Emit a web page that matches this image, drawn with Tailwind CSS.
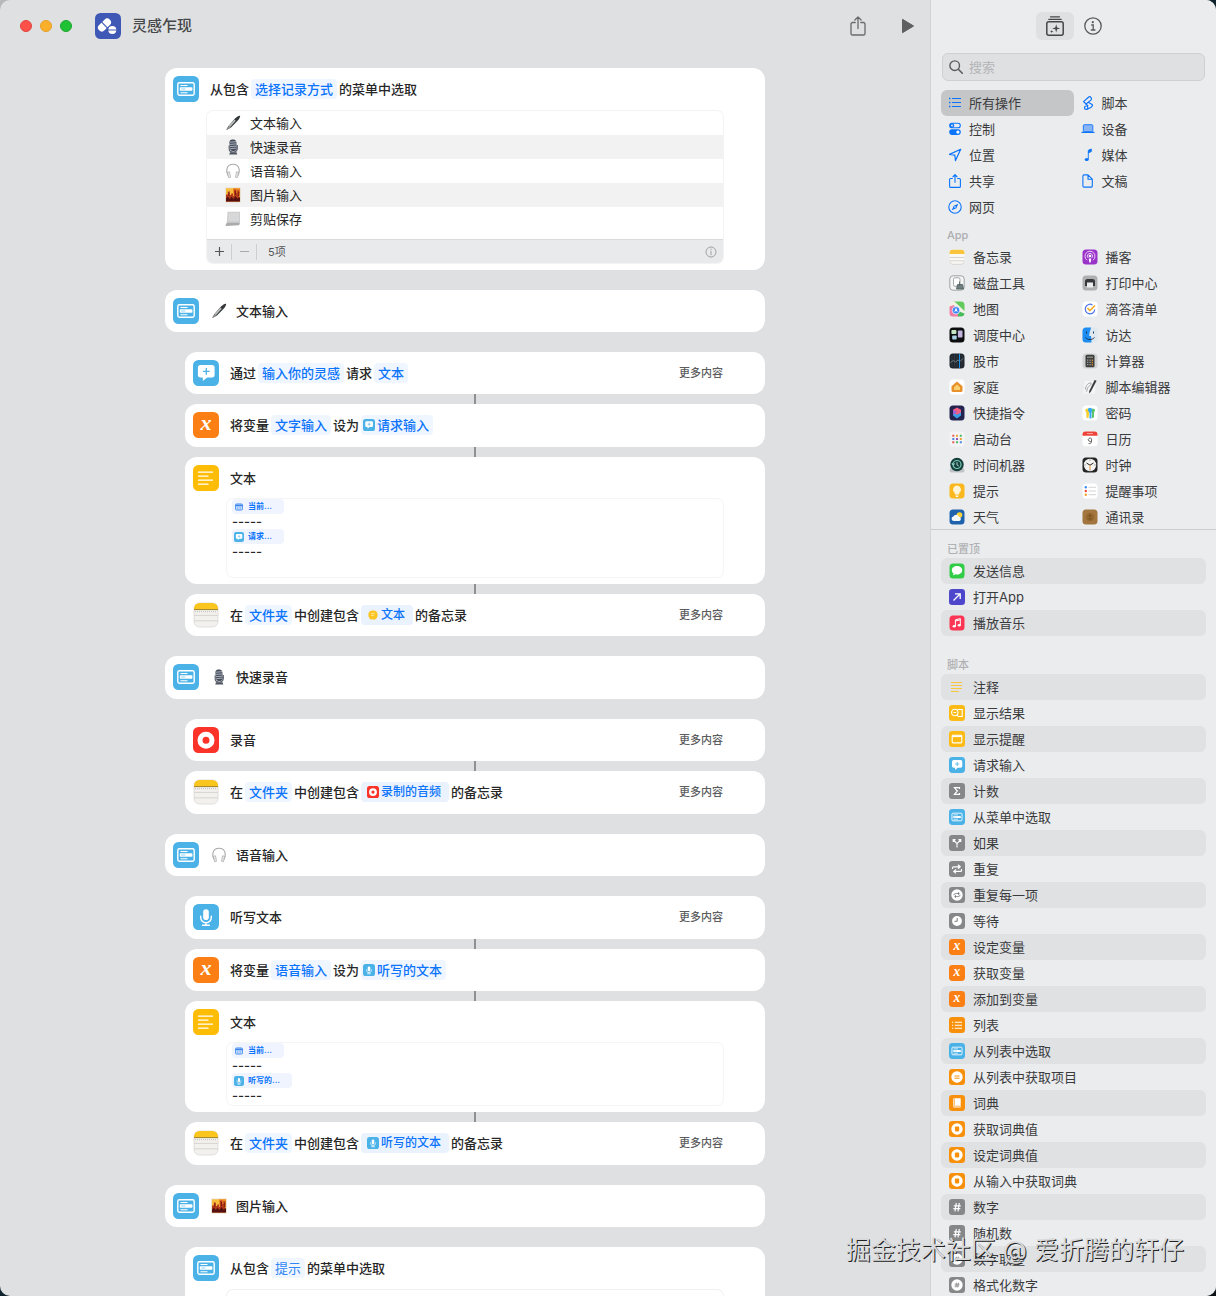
<!DOCTYPE html>
<html lang="zh-CN">
<head>
  <meta charset="UTF-8" />
  <meta name="viewport" content="width=device-width, initial-scale=1.0"/>
  <title>灵感乍现</title>
  <script src="https://cdn.jsdelivr.net/npm/@tailwindcss/browser@4"></script>
</head>
<body class="h-screen overflow-hidden bg-linear-to-br from-[#b9bbbd] via-[#12303f] via-10% to-[#0c1418] font-['Inter','Noto_Sans_CJK_SC',sans-serif] text-[13px] leading-[26px] text-[#262626]">

  <!-- icon set -->
  <svg class="hidden" xmlns="http://www.w3.org/2000/svg">
    <!-- 26px action icons -->
    <symbol id="menu" viewBox="0 0 26 26"><rect width="26" height="26" rx="5.5" fill="#4bb2e8"/><rect x="4.8" y="6.8" width="16.4" height="12.4" rx="1.6" fill="none" stroke="#fff" stroke-width="1.4"/><path d="M7.500 9.500h7M7.500 16.700h7" stroke="#fff" stroke-width="1.100"/><rect x="6.800" y="11.200" width="12.600" height="3.600" rx=".8" fill="#fff"/><path d="M8.300 13h4" stroke="#4bb2e8" stroke-width=".6"/></symbol>
    <symbol id="ask" viewBox="0 0 26 26"><rect width="26" height="26" rx="5.5" fill="#4bb2e8"/><path d="M7.500 5h11.500a2.600 2.600 0 0 1 2.600 2.600v7.200a2.600 2.600 0 0 1-2.600 2.600h-4.800L9.800 21v-3.600H7.500a2.600 2.600 0 0 1-2.600-2.600V7.600A2.600 2.600 0 0 1 7.500 5z" fill="#fff"/><path d="M13.300 8v6.800M9.900 11.400h6.800" stroke="#4bb2e8" stroke-width="1.300"/></symbol>
    <symbol id="var" viewBox="0 0 26 26"><rect width="26" height="26" rx="5.5" fill="#fb7f14"/><text x="13" y="18" text-anchor="middle" font-family="Liberation Serif" font-weight="bold" font-style="italic" font-size="22" fill="#fff">x</text></symbol>
    <symbol id="text" viewBox="0 0 26 26"><rect width="26" height="26" rx="5.5" fill="#fdbc05"/><path d="M5.500 7.200h14M5.500 11.200h9.500M5.500 15.200h14M5.500 19.200h9.500" stroke="#fff" stroke-width="1.300" stroke-linecap="round"/></symbol>
    <symbol id="rec" viewBox="0 0 26 26"><rect width="26" height="26" rx="5.5" fill="#fc3329"/><circle cx="13" cy="13.200" r="6" fill="none" stroke="#fff" stroke-width="5"/></symbol>
    <symbol id="mic" viewBox="0 0 26 26"><rect width="26" height="26" rx="5.5" fill="#4bb2e8"/><rect x="10.200" y="5.200" width="5.600" height="10.800" rx="2.800" fill="#fff"/><path d="M7.700 12.300v1.200a5.300 5.300 0 0 0 10.600 0v-1.200M13 18.800v2.200M9.600 21.200h6.800" fill="none" stroke="#fff" stroke-width="1.400" stroke-linecap="round"/></symbol>
    <symbol id="notes" viewBox="0 0 26 26"><rect x="1" y="1" width="24" height="24" rx="5.500" fill="#f3f1ee" stroke="#dad8d5" stroke-width=".8"/><path d="M1 8V6.500A5.500 5.500 0 0 1 6.500 1h13A5.500 5.500 0 0 1 25 6.500V8z" fill="#fac51c"/><path d="M1 7.600h24" stroke="#a08532" stroke-width="1"/><path d="M2 9.700h22" stroke="#aaa" stroke-width=".7" stroke-dasharray="1 1"/><path d="M1 13.400h24M1 18.800h24" stroke="#cfcdca" stroke-width=".8"/></symbol>
    <symbol id="a-notes" viewBox="0 0 16 16"><rect x=".5" y=".8" width="15" height="14.500" rx="3.200" fill="#f9f8f5"/><path d="M.5 5V4A3.200 3.200 0 0 1 3.700.8h8.600A3.200 3.200 0 0 1 15.500 4v1z" fill="#fac53a"/><path d="M.5 8.500h15M.5 11.800h15" stroke="#cfccc6" stroke-width=".8"/><path d="M1 12.500v0a3 3 0 0 0 3 2.800h8a3 3 0 0 0 3-2.800" fill="none" stroke="#c4c2be" stroke-width=".6"/></symbol>
    <symbol id="date" viewBox="0 0 26 26"><rect x="4" y="5" width="18" height="16" rx="3" fill="#cfe3ff" stroke="#3884ee" stroke-width="2.200"/><path d="M4 9h18" stroke="#3884ee" stroke-width="4"/><path d="M8 14h10M8 17.500h10" stroke="#3884ee" stroke-width="1.500" stroke-dasharray="2 2"/></symbol>
    <symbol id="ydot" viewBox="0 0 26 26"><rect x="3" y="3" width="20" height="20" rx="9" fill="#fcc526"/><path d="M9 10h8M9 14h6" stroke="#ffe69a" stroke-width="2"/></symbol>

    <!-- emoji -->
    <symbol id="e-pen" viewBox="0 0 16 16"><path d="M1.200 15l2.300-4L10 3.600C12 1.400 14 .4 15 .8c.6.800-.6 3-2.400 5L6 12.600z" fill="#35383a"/><path d="M3.500 11L9.500 4.400l1.200 1.300-6 6.900z" fill="#b9bcbd"/><path d="M1.200 15l2.300-4L6 12.600z" fill="#8c8f8d"/></symbol>
    <symbol id="e-mic" viewBox="0 0 16 16"><path d="M4.200 6.500v3.200C4.200 12 6 13 8.200 13S12.300 12 12.300 9.500V6" fill="none" stroke="#5c6270" stroke-width="1.200"/><rect x="4.600" y=".5" width="7" height="11.500" rx="3.300" transform="rotate(-5 8 6)" fill="#454a57"/><path d="M5 3.200l6-.5M4.900 5.400l6.500-.5M5 7.600l6.500-.5M5.300 9.600l6-.5" stroke="#b7bfcc" stroke-width=".9"/><path d="M5 13.200h6.500l.8 2.300H4.200z" fill="#4f5461"/></symbol>
    <symbol id="e-phones" viewBox="0 0 16 16"><path d="M3 12.500C.8 9 .8 1.200 8 1.200S15.200 9 13 12.500" fill="none" stroke="#a6a8aa" stroke-width="1.100"/><path d="M2.300 9.200l2.200-.4 1 5.400-1.800.6zM13.700 9.200l-2.200-.4-1 5.400 1.800.6z" fill="#ececec" stroke="#a5a5a5" stroke-width=".7"/></symbol>
    <symbol id="e-pic" viewBox="0 0 16 16"><rect x=".3" y=".6" width="15.400" height="14.800" fill="#e3d9c6"/><rect x="1" y="1.300" width="14" height="13.200" fill="#f9bd3c"/><path d="M8 1.300h7v5H8z" fill="#ee8a26"/><path d="M1 7.500h1.800v-3h2v3.500h1.400V6.500h2V9h.8V2.500h2.300V6h1V3.200h2V14.500H1z" fill="#b43a1a"/><path d="M1 11.500l1.800-2 2 2.500 1.600-2.500 2 2.500 2-3 2 2.500L15 10v4.500H1z" fill="#54110f"/><path d="M3.800 5.500v3.500M10.500 4v4M13.800 5v4" stroke="#6d1712" stroke-width=".8"/></symbol>
    <symbol id="e-laptop" viewBox="0 0 16 16"><path d="M2.600.8H15v10.600H1.800z" fill="#cbcccd"/><path d="M3.600 1.800h10.400v8.500H3.200z" fill="#d8d8d8"/><path d="M1.800 11.400H15l-.8 2.800L.4 14.900z" fill="#a9aaab"/></symbol>

    <!-- line icons -->
    <symbol id="share" viewBox="0 0 16 20"><g fill="none" stroke="currentColor" stroke-width="1.300" stroke-linecap="round" stroke-linejoin="round"><path d="M5.200 6.500H2.600A1.600 1.600 0 0 0 1 8.100v9.300A1.600 1.600 0 0 0 2.600 19h10.800a1.600 1.600 0 0 0 1.600-1.600V8.100a1.600 1.600 0 0 0-1.600-1.600h-2.600M8 12.500V1M4.900 4L8 .9 11.100 4"/></g></symbol>
    <symbol id="info" viewBox="0 0 18 18"><circle cx="9" cy="9" r="8.200" fill="none" stroke="currentColor" stroke-width="1.300"/><circle cx="8.800" cy="5.200" r="1.100" fill="currentColor"/><path d="M7.200 8h2v4.800M6.800 13h4.600" fill="none" stroke="currentColor" stroke-width="1.300"/></symbol>
    <symbol id="library" viewBox="0 0 18 20"><path d="M4.500.8h9M2.800 3.300h12.400" stroke="currentColor" stroke-width="1.300" stroke-linecap="round"/><rect x=".8" y="5.800" width="16.400" height="13.400" rx="2" fill="none" stroke="currentColor" stroke-width="1.500"/><path d="M10.200 8.200l.9 3.300 3.200.9-3.200.9-.9 3.300-.9-3.300-3.200-.9 3.200-.9zM5.700 13.900l.4 1.200 1.200.4-1.200.4-.4 1.300-.4-1.300-1.200-.4 1.200-.4z" fill="currentColor"/></symbol>
    <symbol id="search" viewBox="0 0 14 14"><circle cx="5.700" cy="5.700" r="4.800" fill="none" stroke="currentColor" stroke-width="1.400"/><path d="M9.300 9.300l4 4" stroke="currentColor" stroke-width="1.600" stroke-linecap="round"/></symbol>
    <symbol id="c-list" viewBox="0 0 14 14"><path d="M1 2.500h1.500M1 6.500h1.500M1 10.500h1.500" stroke="currentColor" stroke-width="1.400"/><path d="M4 2.500H13M4 6.500H13M4 10.500H13" stroke="currentColor" stroke-width="1.200"/></symbol>
    <symbol id="c-share" viewBox="0 0 14 14"><path d="M4.800 4.500H2.600a1 1 0 0 0-1 1v6.900a1 1 0 0 0 1 1h8.800a1 1 0 0 0 1-1V5.500a1 1 0 0 0-1-1H9.200M7 8.800V.8M4.700 3L7 .7 9.300 3" fill="none" stroke="currentColor" stroke-width="1.100" stroke-linejoin="round"/></symbol>
    <symbol id="c-control" viewBox="0 0 14 14"><rect x="1.700" y="1.200" width="10.600" height="4.600" rx="2.300" fill="none" stroke="currentColor" stroke-width="1.100"/><circle cx="4" cy="3.500" r="2.200" fill="currentColor"/><circle cx="4" cy="3.500" r=".9" fill="#ebecee"/><rect x="1.200" y="7.300" width="11.600" height="5.600" rx="2.800" fill="currentColor"/><circle cx="9.900" cy="10.100" r="1.600" fill="#fff"/></symbol>
    <symbol id="c-place" viewBox="0 0 14 14"><path d="M12.700 1.300L1.500 6.400l5.300.8.700 5.400z" fill="none" stroke="currentColor" stroke-width="1.200" stroke-linejoin="round"/></symbol>
    <symbol id="c-web" viewBox="0 0 14 14"><circle cx="7" cy="7" r="6.200" fill="none" stroke="currentColor" stroke-width="1.100"/><path d="M10.300 3.700L8.300 8.200 3.700 10.300 5.800 5.800z" fill="currentColor"/><circle cx="7" cy="7" r=".8" fill="#fff"/></symbol>
    <symbol id="c-script" viewBox="0 0 14 14"><g fill="none" stroke="currentColor" stroke-width="1.200" stroke-linejoin="round"><path d="M9.900 4.100L5 8 2.600 5.600 7.700 1c1.800-1.200 3.600 1.500 2.200 3.100zM7.200 6.300l3.900 2.200c1 1-.2 2.200-1.200 3l-3.700 1.800"/><circle cx="5.200" cy="11.700" r="1.700"/><path d="M5 8l2.200 2.200"/></g></symbol>
    <symbol id="c-device" viewBox="0 0 14 14"><rect x="2.300" y="2.700" width="9.500" height="7" rx="1" fill="#8ab4f4" stroke="currentColor" stroke-width=".9"/><path d="M.5 10.400h13" stroke="currentColor" stroke-width="1.300"/></symbol>
    <symbol id="c-media" viewBox="0 0 14 14"><ellipse cx="5.700" cy="11.500" rx="2" ry="1.600" fill="currentColor"/><path d="M7.300 11.300V2.300l3-1.300v2.600L7.300 4.900" fill="currentColor" stroke="currentColor" stroke-width=".9"/></symbol>
    <symbol id="c-doc" viewBox="0 0 14 14"><path d="M7 .9H3.100A1.200 1.200 0 0 0 1.900 2.100v9.800a1.200 1.200 0 0 0 1.200 1.200h7a1.200 1.200 0 0 0 1.200-1.200V5.200zM7 .9v4.300h4.300" fill="none" stroke="currentColor" stroke-width="1.100" stroke-linejoin="round"/></symbol>

    <!-- app icons -->
    <symbol id="a-disk" viewBox="0 0 16 16"><rect x=".8" y=".8" width="14.400" height="14.400" rx="3.200" fill="#f4f5f5" stroke="#8b9093" stroke-width=".8"/><rect x="4.500" y="2.800" width="6.500" height="8.500" rx="1.500" fill="#fff" stroke="#8d9295" stroke-width=".8"/><path d="M10.500 6.500v4M8.500 9.500h5l1 4.500H7.500z" fill="#6f7f7f" stroke="#4e5c5c" stroke-width=".8"/></symbol>
    <symbol id="a-map" viewBox="0 0 16 16"><rect x=".5" y=".5" width="15" height="15" rx="3.500" fill="#f3f1e6"/><path d="M4 .5h8a3.500 3.500 0 0 1 3.500 3.500v6L6 1z" fill="#63c95d"/><path d="M.5 5.500L5 4l5 11.500H4a3.500 3.500 0 0 1-3.500-3.500z" fill="#f17ca4"/><path d="M9 10l6.500 2.500A3.500 3.500 0 0 1 12 15.500H9z" fill="#46bd5c"/><circle cx="7" cy="9.300" r="3.800" fill="#3d86f3" stroke="#fff" stroke-width=".7"/><path d="M7 6.500l1.800 4.400L7 10l-1.800.9z" fill="#fff"/></symbol>
    <symbol id="a-mission" viewBox="0 0 16 16"><rect x=".5" y=".5" width="15" height="15" rx="3.500" fill="#0c0d0f"/><rect x="2.400" y="3" width="5" height="4" rx=".8" fill="#c4e6c2"/><rect x="8.900" y="3.500" width="4.600" height="7" rx=".8" fill="#c4b5e0"/><rect x="3.200" y="8.500" width="4.500" height="4" rx=".8" fill="#a9d1e4"/></symbol>
    <symbol id="a-stocks" viewBox="0 0 16 16"><rect x=".5" y=".5" width="15" height="15" rx="3.500" fill="#20262d"/><path d="M3 2v12M5.500 2v12M8 2v12M13 2v12" stroke="#3a434c" stroke-width=".6"/><path d="M1.500 9.500l3-2 2 1.500 2.500-2 2 1.500 3-3" fill="none" stroke="#77838d" stroke-width=".9"/><path d="M10.500 1v14" stroke="#1b92ea" stroke-width="1"/></symbol>
    <symbol id="a-home" viewBox="0 0 16 16"><rect x=".5" y=".5" width="15" height="15" rx="3.500" fill="#fff"/><path d="M8 2.500l5.500 4.800v4.200a1.500 1.500 0 0 1-1.500 1.500H4a1.500 1.500 0 0 1-1.500-1.500V7.300z" fill="#e8912b"/><path d="M8 5.500l3 2.700V11H5V8.200z" fill="#fbd071"/></symbol>
    <symbol id="a-shortcut" viewBox="0 0 16 16"><rect x=".5" y=".5" width="15" height="15" rx="3.500" fill="#242350"/><path d="M8 2.500l4 2.300v3.700L8 10.800 4 8.500V4.800z" fill="#ef5f86"/><path d="M4 7.500l4 2.300 4-2.300v3L8 13.500 4 10.500z" fill="#3b9fe8"/><path d="M4 5l4 2-4 3z" fill="#9a62d8"/></symbol>
    <symbol id="a-launch" viewBox="0 0 16 16"><rect x=".5" y=".5" width="15" height="15" rx="3.500" fill="#f4f4f6"/><path d="M3.300 4.700h2M3.300 11.200h2" stroke="#e65c50" stroke-width="2"/><path d="M7 4.700h2M10.800 8h2" stroke="#f0a032" stroke-width="2"/><path d="M10.800 4.700h2M7 11.200h2" stroke="#4bb862" stroke-width="2"/><path d="M3.300 8h2M10.800 11.200h2" stroke="#4b86df" stroke-width="2"/><path d="M7 8h2" stroke="#9355bb" stroke-width="2"/></symbol>
    <symbol id="a-time" viewBox="0 0 16 16"><path d="M2 10h12l1.500 3v.5a2 2 0 0 1-2 2h-11a2 2 0 0 1-2-2V13z" fill="#bfc3c6"/><circle cx="8" cy="7.500" r="6.700" fill="#153f3c"/><circle cx="8" cy="7.500" r="4" fill="none" stroke="#7ac6b2" stroke-width="1.200"/><path d="M8 5v3l1.800 1M3 6l1.200 2L6 6.500" fill="none" stroke="#b1e5d8" stroke-width=".9"/></symbol>
    <symbol id="a-tips" viewBox="0 0 16 16"><rect x=".5" y=".5" width="15" height="15" rx="3.500" fill="#fbb71e"/><path d="M8 2.500a4 4 0 0 1 2.500 7.100L10 11.500H6l-.5-1.900A4 4 0 0 1 8 2.500z" fill="#fff5d6"/><path d="M6.300 12.500h3.400L8.900 14H7.100z" fill="#fff"/></symbol>
    <symbol id="a-weather" viewBox="0 0 16 16"><rect x=".5" y=".5" width="15" height="15" rx="3.500" fill="#1e62ae"/><circle cx="10.500" cy="6" r="2.800" fill="#fdd13a"/><path d="M4.500 12a2.300 2.300 0 0 1-.2-4.500A3.200 3.200 0 0 1 10 7.700 2.200 2.200 0 0 1 10.300 12z" fill="#f2f7fc"/></symbol>
    <symbol id="a-podcast" viewBox="0 0 16 16"><rect x=".5" y=".5" width="15" height="15" rx="3.500" fill="#9a33c9"/><g fill="none" stroke="#f3dcfa" stroke-width=".9"><path d="M5 11.200a5 5 0 1 1 6 0"/><path d="M6.300 9a2.600 2.600 0 1 1 3.400 0"/></g><circle cx="8" cy="7" r="1.300" fill="#fff"/><path d="M6.800 9.500h2.400l-.5 4H7.300z" fill="#fff"/></symbol>
    <symbol id="a-print" viewBox="0 0 16 16"><rect x=".5" y=".5" width="15" height="15" rx="3.500" fill="#adafb1"/><path d="M3 6.500A2.500 2.500 0 0 1 5.500 4h5A2.500 2.500 0 0 1 13 6.500V11H3z" fill="#35373a"/><rect x="5" y="7.500" width="6" height="5" fill="#eceded"/></symbol>
    <symbol id="a-tick" viewBox="0 0 16 16"><rect x=".5" y=".5" width="15" height="15" rx="3.500" fill="#fff"/><path d="M10.500 3.900A4.800 4.800 0 1 0 12.800 8.500" fill="none" stroke="#4a73ec" stroke-width="1.200"/><path d="M5.500 7l2.300 2.500L13 4.500" fill="none" stroke="#f3ad28" stroke-width="1.700"/></symbol>
    <symbol id="a-finder" viewBox="0 0 16 16"><rect x=".5" y=".5" width="15" height="15" rx="3.500" fill="#dfe7ef"/><path d="M4 .5h5.200C8 3.500 7.400 6 7.200 9H9l.5 6.500H4A3.500 3.500 0 0 1 .5 12V4A3.500 3.500 0 0 1 4 .5z" fill="#1d8df1"/><path d="M4.500 4.500v2M11.500 4.500v2M3.500 10.500c2.500 2.700 6.500 2.700 9 0" fill="none" stroke="#1a3556" stroke-width="1"/></symbol>
    <symbol id="a-calc" viewBox="0 0 16 16"><rect x=".5" y=".5" width="15" height="15" rx="3.500" fill="#d0d2d3"/><rect x="3.500" y="1.800" width="9" height="12.400" rx="1.500" fill="#3d3e3d"/><path d="M5 4.200h6" stroke="#8a8d87" stroke-width="1.400"/><path d="M5 7.200h4M5 9.400h4M5 11.700h4" stroke="#9a9a97" stroke-width="1.200" stroke-dasharray="1 .6"/><path d="M10.300 6.500v6" stroke="#d88e32" stroke-width="1.200" stroke-dasharray="1.500 .7"/></symbol>
    <symbol id="a-editor" viewBox="0 0 16 16"><path d="M3 2h11l-1 12.500H1z" fill="#f5f5f5"/><path d="M3.500 10.500c0-4 3-7 5.500-6.500 1 2-2.500 3-3.500 5s.5 3-1.500 3.500" fill="none" stroke="#9da0a1" stroke-width=".9"/><path d="M12.600 1l2 .8-5.800 11L7 14.500l.2-2.500z" fill="#3b3d3f"/></symbol>
    <symbol id="a-pass" viewBox="0 0 16 16"><rect x=".5" y=".5" width="15" height="15" rx="3.500" fill="#fff"/><path d="M3.200 5.500a2 2 0 0 1 4 0v1L6.500 13h-2L4.300 8z" fill="#f6cf32"/><path d="M9 5.500a2 2 0 0 1 4 0L12 8v4.500l-2 .5V8z" fill="#5dc46e"/><path d="M5.800 5a2.200 2.200 0 0 1 4.400 0L9.500 8v5.500h-2V8z" fill="#36a8ef"/></symbol>
    <symbol id="a-cal" viewBox="0 0 16 16"><rect x=".5" y=".8" width="15" height="14.500" rx="3" fill="#fff"/><path d="M.5 4.800V3.500A3 3 0 0 1 3.500.5h9a3 3 0 0 1 3 3v1.300z" fill="#ee4238"/><path d="M5 2.600h6" stroke="#f7aaa5" stroke-width="1"/><path d="M9.600 9.500a1.700 1.700 0 1 1 0-1.500v2c0 1.700-1 2.900-3 2.600" fill="none" stroke="#555" stroke-width=".9"/></symbol>
    <symbol id="a-clock" viewBox="0 0 16 16"><rect x=".5" y=".5" width="15" height="15" rx="3.500" fill="#252525"/><circle cx="8" cy="8" r="6.200" fill="#f4f4f2"/><path d="M8 2.500v1M8 12.500v1M2.500 8h1M12.500 8h1" stroke="#333" stroke-width=".8"/><path d="M4.500 6L8 8.200 11.500 6" fill="none" stroke="#222" stroke-width="1"/><path d="M8 8v4.500" stroke="#f0942a" stroke-width=".9"/></symbol>
    <symbol id="a-remind" viewBox="0 0 16 16"><rect x=".5" y=".5" width="15" height="15" rx="3.500" fill="#fff"/><circle cx="3.800" cy="4.300" r="1.200" fill="#3d8cf0"/><circle cx="3.800" cy="8" r="1.200" fill="#ef4b3f"/><circle cx="3.800" cy="11.700" r="1.200" fill="#f5a02c"/><path d="M6.500 4.300h7.500M6.500 8h7.500M6.500 11.700h7.500" stroke="#c9cacb" stroke-width=".8"/></symbol>
    <symbol id="a-contact" viewBox="0 0 16 16"><rect x=".5" y=".5" width="15" height="15" rx="3.500" fill="#a3763f"/><circle cx="8" cy="8" r="4.300" fill="#96682f"/><circle cx="8" cy="6.700" r="1.400" fill="#7a5424"/><path d="M5.500 10.500c.6-2 4.400-2 5 0z" fill="#7a5424"/></symbol>

    <!-- small action icons -->
    <symbol id="s-msg" viewBox="0 0 16 16"><rect x=".5" y=".5" width="15" height="15" rx="3.500" fill="#2fcc46"/><path d="M8 3c3 0 5.200 1.800 5.200 4.200S11 11.500 8 11.500c-.6 0-1.100 0-1.600-.2L4 12.500l.6-2A4 4 0 0 1 2.800 7.200C2.800 4.800 5 3 8 3z" fill="#fff"/></symbol>
    <symbol id="s-open" viewBox="0 0 16 16"><rect width="16" height="16" rx="3.200" fill="#4f47cb"/><path d="M4.500 11.500l6.500-6.500M6 4.800h5.200V10" fill="none" stroke="#fff" stroke-width="1.300"/></symbol>
    <symbol id="s-music" viewBox="0 0 16 16"><rect x=".5" y=".5" width="15" height="15" rx="3.500" fill="#fb3553"/><ellipse cx="5.200" cy="11.200" rx="1.600" ry="1.300" fill="#fff"/><ellipse cx="10.200" cy="10.200" rx="1.600" ry="1.300" fill="#fff"/><path d="M6.400 11.200V4.800l4.900-1.200v6.600M6.400 6l4.900-1.200" fill="none" stroke="#fff" stroke-width="1"/></symbol>
    <symbol id="s-comment" viewBox="0 0 16 16"><path d="M2.500 3.500h10M2.500 6.500h10M2.500 9.500h10M2.500 12.500h7" stroke="#f9c63b" stroke-width="1.200" stroke-linecap="round"/></symbol>
    <symbol id="s-result" viewBox="0 0 16 16"><rect width="16" height="16" rx="3.200" fill="#fbbb14"/><g fill="none" stroke="#fff" stroke-width="1.100"><path d="M8.500 4.500h4.700v7H9.500"/><circle cx="5.800" cy="7.500" r="3.200"/><path d="M8 10l1.800 2M4.500 7.500h2.800"/></g></symbol>
    <symbol id="s-alert" viewBox="0 0 16 16"><rect width="16" height="16" rx="3.200" fill="#fbbb14"/><rect x="3.200" y="4.300" width="9.600" height="7.600" rx=".8" fill="none" stroke="#fff" stroke-width="1.100"/><path d="M3 5.300h10" stroke="#fff" stroke-width="1.600"/></symbol>
    <symbol id="s-sum" viewBox="0 0 16 16"><rect width="16" height="16" rx="3.200" fill="#868789"/><path d="M10.500 6V4.700H5.500L8.300 8l-2.800 3.300h5V10" fill="none" stroke="#fff" stroke-width="1.200"/></symbol>
    <symbol id="s-if" viewBox="0 0 16 16"><rect width="16" height="16" rx="3.200" fill="#868789"/><path d="M8 12.500V8.600L4.500 5M8 8.600L11.500 5M4.200 7V4.600h2.300M11.800 7V4.600H9.500" fill="none" stroke="#fff" stroke-width="1.100"/></symbol>
    <symbol id="s-loop" viewBox="0 0 16 16"><rect width="16" height="16" rx="3.200" fill="#868789"/><path d="M3.500 8V6.800A1 1 0 0 1 4.500 5.800h6M9 3.800l2.200 2L9 7.800M12.500 8v1.400a1 1 0 0 1-1 1h-6M7 8.400l-2.200 2 2.200 2" fill="none" stroke="#fff" stroke-width="1.200"/></symbol>
    <symbol id="s-each" viewBox="0 0 16 16"><rect width="16" height="16" rx="3.200" fill="#868789"/><circle cx="8" cy="8" r="5.700" fill="#fff"/><path d="M5 8.200C5 6.500 6 6.500 10 6.500M9 5.300l1.300 1.200L9 7.700M11 7.800c0 1.700-1 1.700-5 1.700M7 8.300L5.700 9.500 7 10.700" fill="none" stroke="#6f7072" stroke-width=".9"/></symbol>
    <symbol id="s-wait" viewBox="0 0 16 16"><rect width="16" height="16" rx="3.200" fill="#868789"/><circle cx="8" cy="8" r="4.900" fill="#fff"/><path d="M8.200 5v3.300H5.500" fill="none" stroke="#777" stroke-width="1"/></symbol>
    <symbol id="s-list" viewBox="0 0 16 16"><rect width="16" height="16" rx="3.200" fill="#f8900c"/><path d="M3 5.300h1.300M3 8.300h1.300M3 11.300h1.300M5.800 5.300H13M5.800 8.300H13M5.800 11.300H13" stroke="#fff" stroke-width="1.100"/></symbol>
    <symbol id="s-item" viewBox="0 0 16 16"><rect width="16" height="16" rx="3.200" fill="#f8900c"/><circle cx="8" cy="8" r="5.700" fill="#fff"/><path d="M5.500 7h5M5.500 9.200h5" stroke="#f8900c" stroke-width="1"/></symbol>
    <symbol id="s-dict" viewBox="0 0 16 16"><rect width="16" height="16" rx="3.200" fill="#f8900c"/><path d="M5 3.300h6.700v9.300H5.200a1.200 1.200 0 0 1-1-1.200V4.200A1 1 0 0 1 5 3.300z" fill="#fff"/><path d="M5.300 3.500v7M4.500 11.200h7" stroke="#f8900c" stroke-width=".7"/></symbol>
    <symbol id="s-dictval" viewBox="0 0 16 16"><rect width="16" height="16" rx="3.200" fill="#f8900c"/><circle cx="8" cy="8" r="5.700" fill="#fff"/><rect x="5.900" y="5.600" width="4.300" height="4.800" rx=".8" fill="#f8900c"/></symbol>
    <symbol id="s-num" viewBox="0 0 16 16"><rect width="16" height="16" rx="3.200" fill="#868789"/><path d="M7.300 4L6 12.300M10.300 4L9 12.300M4.800 6.800h7M4.300 9.700h7" stroke="#fff" stroke-width="1.200"/></symbol>
    <symbol id="s-format" viewBox="0 0 16 16"><rect width="16" height="16" rx="3.200" fill="#868789"/><circle cx="8" cy="8" r="5.700" fill="#fff"/><path d="M7.500 5.700L6.800 10.500M9.400 5.700l-.7 4.800M5.800 7.200h4.700M5.500 9h4.700" stroke="#777" stroke-width=".7"/></symbol>
  </svg>

  <div class="flex h-screen overflow-hidden rounded-[10px] bg-[#dfe0e2]">

    <!-- editor -->
    <main class="flex min-w-0 flex-1 flex-col">
      <header class="flex h-[52px] shrink-0 items-center pr-4 pl-5">
        <div class="flex gap-2">
          <button aria-label="关闭" class="size-3 rounded-full border border-[#e0443e] bg-[#fb5149]"></button>
          <button aria-label="最小化" class="size-3 rounded-full border border-[#e39e2b] bg-[#fcb02a]"></button>
          <button aria-label="缩放" class="size-3 rounded-full border border-[#1ea52f] bg-[#1fc234]"></button>
        </div>
        <svg class="ml-[23px] size-[26px]" viewBox="0 0 26 26"><rect width="26" height="26" rx="5.500" fill="#4058b5"/><rect x="1.900" y="8.200" width="15.200" height="7.600" rx="3.800" transform="rotate(-45 9.500 12)" fill="#fff"/><path d="M6.200 8.700l6.600 6.600" stroke="#4058b5" stroke-width="1.200"/><circle cx="17.300" cy="17" r="4.800" fill="#4058b5"/><circle cx="17.300" cy="17" r="4" fill="#fff"/><path d="M13 17h8.500" stroke="#4058b5" stroke-width="1.100"/></svg>
        <h1 class="ml-[11px] flex-1 text-[15px] font-medium text-[#454648]">灵感乍现</h1>
        <button aria-label="共享" class="text-[#68696b]"><svg class="h-5 w-4"><use href="#share"/></svg></button>
        <button aria-label="运行" class="ml-9"><svg class="h-4 w-3" viewBox="0 0 12 16"><path d="M.5 1.300L11.600 8 .5 14.700z" fill="#5e5f61" stroke="#5e5f61" stroke-linejoin="round"/></svg></button>
      </header>

      <div class="min-h-0 flex-1 overflow-hidden px-4 pt-4">
        <div class="mx-auto flex w-full max-w-[600px] flex-col gap-5 font-medium">

          <section class="rounded-xl bg-white px-2 pt-2 pb-[7px]">
            <div class="flex items-center gap-[11px]">
              <svg class="size-[26px]"><use href="#menu"/></svg>
              <p class="flex items-center">从包含<button class="mx-0.5 rounded bg-[#f0f6ff] px-1 leading-5 text-[#0b74fb]">选择记录方式</button>的菜单中选取</p>
            </div>
            <div class="mt-[9px] mr-[34px] ml-[34px] overflow-hidden rounded-md font-normal leading-6 ring-1 ring-[#f3f3f3]">
              <ul class="pb-2">
                <li class="flex items-center gap-[9px] pl-[18px]"><svg class="size-4"><use href="#e-pen"/></svg>文本输入</li>
                <li class="flex items-center gap-[9px] bg-[#f2f2f2] pl-[18px]"><svg class="size-4"><use href="#e-mic"/></svg>快速录音</li>
                <li class="flex items-center gap-[9px] pl-[18px]"><svg class="size-4"><use href="#e-phones"/></svg>语音输入</li>
                <li class="flex items-center gap-[9px] bg-[#f2f2f2] pl-[18px]"><svg class="size-4"><use href="#e-pic"/></svg>图片输入</li>
                <li class="flex items-center gap-[9px] pl-[18px]"><svg class="size-4"><use href="#e-laptop"/></svg>剪贴保存</li>
              </ul>
              <div class="flex h-6 items-center border-t border-[#d9dadc] bg-[#e9eaec] text-[11px] text-[#55575a]">
                <button aria-label="添加" class="flex h-4 w-[25px] items-center justify-center border-r border-[#cdced0]"><svg class="size-[9px]" viewBox="0 0 9 9"><path d="M4.500 0v9M0 4.500h9" stroke="#55575a" stroke-width="1.200"/></svg></button>
                <button aria-label="移除" class="flex h-4 w-[25px] items-center justify-center border-r border-[#cdced0]"><svg class="size-[9px]" viewBox="0 0 9 9"><path d="M0 4.500h9" stroke="#aaabad" stroke-width="1.200"/></svg></button>
                <span class="ml-[11px] flex-1">5项</span>
                <svg class="mr-1.5 size-3" viewBox="0 0 12 12"><circle cx="6" cy="6" r="5" fill="none" stroke="#a0a1a3"/><path d="M6 2.700v1.200M6 4.800v4.400" stroke="#a0a1a3"/></svg>
              </div>
            </div>
          </section>

          <section class="flex items-center rounded-xl bg-white p-2">
            <svg class="size-[26px]"><use href="#menu"/></svg>
            <svg class="ml-3 size-4"><use href="#e-pen"/></svg>
            <h2 class="ml-[9px]">文本输入</h2>
          </section>

          <div class="ml-5 flex flex-col">
            <section class="flex items-center gap-[11px] rounded-xl bg-white py-2 pr-[42px] pl-2">
              <svg class="size-[26px]"><use href="#ask"/></svg>
              <p class="flex flex-1 items-center">通过<button class="mx-0.5 rounded bg-[#f0f6ff] px-1 leading-5 text-[#0b74fb]">输入你的灵感</button>请求<button class="mx-0.5 rounded bg-[#f0f6ff] px-1 leading-5 text-[#0b74fb]">文本</button></p>
              <button class="text-[11px] text-[#5c5d5f]">更多内容</button>
            </section>
            <div class="h-2.5 w-0.5 self-center bg-[#8e9092]"></div>
            <section class="flex items-center gap-[11px] rounded-xl bg-white pt-2 pr-[42px] pb-[9px] pl-2">
              <svg class="size-[26px]"><use href="#var"/></svg>
              <p class="flex flex-1 items-center">将变量<button class="mx-0.5 rounded bg-[#f0f6ff] px-1 leading-5 text-[#0b74fb]">文字输入</button>设为<button class="mx-0.5 flex items-center gap-0.5 rounded bg-[#f0f6ff] pr-1 pl-0.5 leading-5 text-[#0b74fb]"><svg class="size-3"><use href="#ask"/></svg>请求输入</button></p>
            </section>
            <div class="h-2.5 w-0.5 self-center bg-[#8e9092]"></div>
            <section class="rounded-xl bg-white px-2 pt-2 pb-[7px]">
              <div class="flex items-center gap-[11px]">
                <svg class="size-[26px]"><use href="#text"/></svg>
                <h3>文本</h3>
              </div>
              <div class="mt-2 mr-[34px] ml-[34px] flex h-[78px] flex-col items-start rounded-md pl-[5px] text-[13px] leading-[15px] ring-1 ring-[#f5f5f6]">
                <span class="flex h-[15px] items-center gap-1 rounded bg-[#f0f4ff] pr-3 pl-0.5 text-[8px] font-bold text-[#0b74fb]"><svg class="size-2.5"><use href="#date"/></svg>当前...</span>
                <span>-----</span>
                <span class="flex h-[15px] items-center gap-1 rounded bg-[#f0f4ff] pr-3 pl-0.5 text-[8px] font-bold text-[#0b74fb]"><svg class="size-2.5"><use href="#ask"/></svg>请求...</span>
                <span>-----</span>
              </div>
            </section>
            <div class="h-2.5 w-0.5 self-center bg-[#8e9092]"></div>
            <section class="flex items-center gap-[11px] rounded-xl bg-white py-2 pr-[42px] pl-2">
              <svg class="size-[26px]"><use href="#notes"/></svg>
              <p class="flex flex-1 items-center">在<button class="mx-0.5 rounded bg-[#f0f6ff] px-1 leading-5 text-[#0b74fb]">文件夹</button>中创建包含<button class="mx-0.5 flex items-center gap-0.5 rounded bg-[#eaf2fe] pr-2 pl-1.5 text-xs leading-5 text-[#0b74fb]"><svg class="size-3"><use href="#ydot"/></svg>文本</button>的备忘录</p>
              <button class="text-[11px] text-[#5c5d5f]">更多内容</button>
            </section>
          </div>

          <section class="flex items-center rounded-xl bg-white px-2 pt-2 pb-[9px]">
            <svg class="size-[26px]"><use href="#menu"/></svg>
            <svg class="ml-3 size-4"><use href="#e-mic"/></svg>
            <h2 class="ml-[9px]">快速录音</h2>
          </section>

          <div class="ml-5 flex flex-col">
            <section class="flex items-center gap-[11px] rounded-xl bg-white py-2 pr-[42px] pl-2">
              <svg class="size-[26px]"><use href="#rec"/></svg>
              <h3 class="flex-1">录音</h3>
              <button class="text-[11px] text-[#5c5d5f]">更多内容</button>
            </section>
            <div class="h-2.5 w-0.5 self-center bg-[#8e9092]"></div>
            <section class="flex items-center gap-[11px] rounded-xl bg-white pt-2 pr-[42px] pb-[9px] pl-2">
              <svg class="size-[26px]"><use href="#notes"/></svg>
              <p class="flex flex-1 items-center">在<button class="mx-0.5 rounded bg-[#f0f6ff] px-1 leading-5 text-[#0b74fb]">文件夹</button>中创建包含<button class="mx-0.5 flex items-center gap-0.5 rounded bg-[#eaf2fe] pr-2 pl-1.5 text-xs leading-5 text-[#0b74fb]"><svg class="size-3"><use href="#rec"/></svg>录制的音频</button>的备忘录</p>
              <button class="text-[11px] text-[#5c5d5f]">更多内容</button>
            </section>
          </div>

          <section class="flex items-center rounded-xl bg-white p-2">
            <svg class="size-[26px]"><use href="#menu"/></svg>
            <svg class="ml-3 size-4"><use href="#e-phones"/></svg>
            <h2 class="ml-[9px]">语音输入</h2>
          </section>

          <div class="ml-5 flex flex-col">
            <section class="flex items-center gap-[11px] rounded-xl bg-white pt-2 pr-[42px] pb-[9px] pl-2">
              <svg class="size-[26px]"><use href="#mic"/></svg>
              <h3 class="flex-1">听写文本</h3>
              <button class="text-[11px] text-[#5c5d5f]">更多内容</button>
            </section>
            <div class="h-2.5 w-0.5 self-center bg-[#8e9092]"></div>
            <section class="flex items-center gap-[11px] rounded-xl bg-white py-2 pr-[42px] pl-2">
              <svg class="size-[26px]"><use href="#var"/></svg>
              <p class="flex flex-1 items-center">将变量<button class="mx-0.5 rounded bg-[#f0f6ff] px-1 leading-5 text-[#0b74fb]">语音输入</button>设为<button class="mx-0.5 flex items-center gap-0.5 rounded bg-[#f0f6ff] pr-1 pl-0.5 leading-5 text-[#0b74fb]"><svg class="size-3"><use href="#mic"/></svg>听写的文本</button></p>
            </section>
            <div class="h-2.5 w-0.5 self-center bg-[#8e9092]"></div>
            <section class="rounded-xl bg-white px-2 pt-2 pb-[7px]">
              <div class="flex items-center gap-[11px]">
                <svg class="size-[26px]"><use href="#text"/></svg>
                <h3>文本</h3>
              </div>
              <div class="mt-2 mr-[34px] ml-[34px] flex h-[62px] flex-col items-start rounded-md pl-[5px] text-[13px] leading-[15px] ring-1 ring-[#f5f5f6]">
                <span class="flex h-[15px] items-center gap-1 rounded bg-[#f0f4ff] pr-3 pl-0.5 text-[8px] font-bold text-[#0b74fb]"><svg class="size-2.5"><use href="#date"/></svg>当前...</span>
                <span>-----</span>
                <span class="flex h-[15px] items-center gap-1 rounded bg-[#f0f4ff] pr-3 pl-0.5 text-[8px] font-bold text-[#0b74fb]"><svg class="size-2.5"><use href="#mic"/></svg>听写的...</span>
                <span>-----</span>
              </div>
            </section>
            <div class="h-2.5 w-0.5 self-center bg-[#8e9092]"></div>
            <section class="flex items-center gap-[11px] rounded-xl bg-white pt-2 pr-[42px] pb-[9px] pl-2">
              <svg class="size-[26px]"><use href="#notes"/></svg>
              <p class="flex flex-1 items-center">在<button class="mx-0.5 rounded bg-[#f0f6ff] px-1 leading-5 text-[#0b74fb]">文件夹</button>中创建包含<button class="mx-0.5 flex items-center gap-0.5 rounded bg-[#eaf2fe] pr-2 pl-1.5 text-xs leading-5 text-[#0b74fb]"><svg class="size-3"><use href="#mic"/></svg>听写的文本</button>的备忘录</p>
              <button class="text-[11px] text-[#5c5d5f]">更多内容</button>
            </section>
          </div>

          <section class="flex items-center rounded-xl bg-white p-2">
            <svg class="size-[26px]"><use href="#menu"/></svg>
            <svg class="ml-3 size-4"><use href="#e-pic"/></svg>
            <h2 class="ml-[9px]">图片输入</h2>
          </section>

          <section class="ml-5 rounded-xl bg-white px-2 pt-2 pb-[7px]">
            <div class="flex items-center gap-[11px]">
              <svg class="size-[26px]"><use href="#menu"/></svg>
              <p class="flex items-center">从包含<button class="mx-0.5 rounded bg-[#f0f6ff] px-1 font-normal leading-5 text-[#2f86f6]">提示</button>的菜单中选取</p>
            </div>
            <div class="mt-[9px] mr-[34px] ml-[34px] h-[152px] rounded-md ring-1 ring-[#f0f0f0]"></div>
          </section>
        </div>
      </div>
    </main>

    <!-- action library -->
    <aside class="flex w-[286px] shrink-0 flex-col border-l border-[#d2d3d5] bg-[#ebecee] text-[#3a3b3d]">
      <div class="flex h-[52px] shrink-0 items-center justify-center gap-2.5 pr-2.5 text-[#58595b]">
        <button aria-label="操作资源库" class="flex h-7 w-[38px] items-center justify-center rounded-md bg-[#dfe0e2] text-[#454648]"><svg class="h-5 w-[18px]"><use href="#library"/></svg></button>
        <button aria-label="快捷指令详细信息"><svg class="size-[18px]"><use href="#info"/></svg></button>
      </div>
      <label class="mx-[11px] mt-px flex h-7 shrink-0 items-center gap-1.5 rounded-md border border-[#cfd0d2] bg-[#dfe0e2] px-1.5 text-[#5b5c5e]">
        <svg class="size-3.5"><use href="#search"/></svg>
        <input type="search" aria-label="搜索" placeholder="搜索" class="min-w-0 flex-1 bg-transparent outline-none placeholder:text-[#b4b5b7]">
      </label>

      <div class="mt-[9px] h-[440px] shrink-0 overflow-hidden border-b border-[#cbccce] px-2.5">
        <div class="grid grid-flow-col grid-cols-2 grid-rows-5" id="categories"></div>
        <h2 class="pt-1.5 pl-1.5 text-[11px] leading-[18px] font-medium text-[#adaeb0]">App</h2>
        <div class="grid grid-flow-col grid-cols-2 grid-rows-11" id="apps"></div>
      </div>

      <div class="min-h-0 flex-1 overflow-hidden px-2.5">
        <h2 class="pt-2.5 pl-1.5 text-[11px] leading-[18px] font-medium text-[#b0b1b3]">已置顶</h2>
        <ul id="pinned"></ul>
        <h2 class="pt-5 pl-1.5 text-[11px] leading-[18px] font-medium text-[#b0b1b3]">脚本</h2>
        <ul id="scripting"></ul>
      </div>
    </aside>
  </div>

  <p class="absolute right-8 bottom-7 text-[25px] leading-9 whitespace-nowrap text-[#d8d9da] text-shadow-[1px_1px_0_#222]">掘金技术社区 @ 爱折腾的轩仔</p>

  <script>
    const categories = [
      ["c-list", "所有操作"], ["c-control", "控制"], ["c-place", "位置"], ["c-share", "共享"], ["c-web", "网页"],
      ["c-script", "脚本"], ["c-device", "设备"], ["c-media", "媒体"], ["c-doc", "文稿"]
    ];
    const apps = [
      ["a-notes", "备忘录"], ["a-disk", "磁盘工具"], ["a-map", "地图"], ["a-mission", "调度中心"], ["a-stocks", "股市"],
      ["a-home", "家庭"], ["a-shortcut", "快捷指令"], ["a-launch", "启动台"], ["a-time", "时间机器"], ["a-tips", "提示"], ["a-weather", "天气"],
      ["a-podcast", "播客"], ["a-print", "打印中心"], ["a-tick", "滴答清单"], ["a-finder", "访达"], ["a-calc", "计算器"],
      ["a-editor", "脚本编辑器"], ["a-pass", "密码"], ["a-cal", "日历"], ["a-clock", "时钟"], ["a-remind", "提醒事项"], ["a-contact", "通讯录"]
    ];
    const pinned = [["s-msg", "发送信息"], ["s-open", "打开App"], ["s-music", "播放音乐"]];
    const scripting = [
      ["s-comment", "注释"], ["s-result", "显示结果"], ["s-alert", "显示提醒"], ["ask", "请求输入"], ["s-sum", "计数"],
      ["menu", "从菜单中选取"], ["s-if", "如果"], ["s-loop", "重复"], ["s-each", "重复每一项"], ["s-wait", "等待"],
      ["var", "设定变量"], ["var", "获取变量"], ["var", "添加到变量"], ["s-list", "列表"], ["menu", "从列表中选取"],
      ["s-item", "从列表中获取项目"], ["s-dict", "词典"], ["s-dictval", "获取词典值"], ["s-dictval", "设定词典值"],
      ["s-dictval", "从输入中获取词典"], ["s-num", "数字"], ["s-num", "随机数"], ["s-format", "数字取整"], ["s-format", "格式化数字"]
    ];

    const fill = (id, items, row) => {
      document.getElementById(id).innerHTML = items.map(row).join("");
    };

    fill("categories", categories, ([icon, name], i) => `
      <button class="flex h-[26px] items-center gap-[7px] rounded-md pl-[7px] text-left ${i === 0 ? "bg-[#c5c6c8]" : ""}">
        <svg class="size-3.5 text-[#0b74fb]"><use href="#${icon}"/></svg>${name}
      </button>`);

    fill("apps", apps, ([icon, name]) => `
      <button class="flex h-[26px] items-center gap-2 pl-2 text-left">
        <svg class="size-4"><use href="#${icon}"/></svg>${name}
      </button>`);

    const actionRow = ([icon, name], i) => `
      <li class="flex h-[26px] items-center gap-2 rounded-md pl-2 ${i % 2 === 0 ? "bg-[#e0e1e3]" : ""}">
        <svg class="size-4"><use href="#${icon}"/></svg>${name}
      </li>`;
    fill("pinned", pinned, actionRow);
    fill("scripting", scripting, actionRow);
  </script>
</body>
</html>
